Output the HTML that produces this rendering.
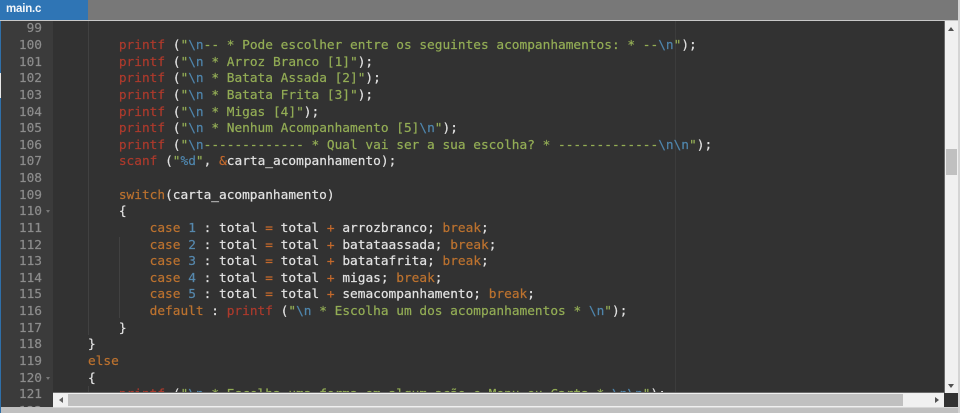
<!DOCTYPE html>
<html><head><meta charset="utf-8">
<style>
html,body{margin:0;padding:0;width:960px;height:413px;overflow:hidden;background:#c0c0c0}
#a{position:absolute;left:0;top:0;width:960px;height:413px;overflow:hidden;filter:blur(.35px)}
.r{position:absolute}
pre{margin:0;position:absolute;font-family:"DejaVu Sans Mono","Liberation Mono",monospace;font-size:12.8px;line-height:16.62px;-webkit-text-stroke:.2px currentColor}
#code{left:88px;top:21.4px;color:#e2e2e2;white-space:pre}
#nums{left:0;top:21.4px;width:42px;text-align:right;color:#8c8c8c}
.f{color:#ad3a2c}.s{color:#93ad55}.e{color:#4f86ad}.k{color:#bc722f}.o{color:#c4692c}.n{color:#5688ad}
</style></head><body><div id="a">
<div class="r" style="left:0;top:0;width:960px;height:20px;background:#787878"></div>
<div class="r" style="left:0;top:0;width:88px;height:20px;background:#2f75b5"></div>
<div class="r" style="left:6px;top:0;font:bold 11.5px/19px 'Liberation Sans',sans-serif;letter-spacing:-.2px;color:#f2f6fa">main.c</div>
<div class="r" style="left:0;top:20px;width:960px;height:1px;background:#c8c8c8"></div>
<div class="r" style="left:958px;top:0;width:2px;height:413px;background:#d4d4d4"></div>
<div class="r" style="left:1px;top:21px;width:957px;height:372px;background:#323232"></div>
<div class="r" style="left:1px;top:21px;width:52px;height:386px;background:#3b3b3b"></div>
<div class="r" style="left:0;top:21px;width:1px;height:392px;background:#2f6fa8"></div>
<div class="r" style="left:0;top:73px;width:1px;height:25px;background:#e8e8e8"></div>
<div class="r" style="left:88px;top:21px;width:1px;height:314px;background:#414141"></div>
<div class="r" style="left:88px;top:386px;width:1px;height:7px;background:#414141"></div>
<div class="r" style="left:119px;top:237px;width:1px;height:81px;background:#414141"></div>
<div class="r" style="left:675px;top:21px;width:1px;height:372px;background:#3c3c3c"></div>
<pre id="nums">99
100
101
102
103
104
105
106
107
108
109
110
111
112
113
114
115
116
117
118
119
120
121
122</pre>
<div class="r" style="left:46px;top:210px;width:0;height:0;border-left:2.5px solid transparent;border-right:2.5px solid transparent;border-top:3px solid #777"></div>
<div class="r" style="left:46px;top:377px;width:0;height:0;border-left:2.5px solid transparent;border-right:2.5px solid transparent;border-top:3px solid #777"></div>
<pre id="code">

    <span class="f">printf</span> (<span class="s">"</span><span class="e">\n</span><span class="s">-- * Pode escolher entre os seguintes acompanhamentos: * --</span><span class="e">\n</span><span class="s">"</span>);
    <span class="f">printf</span> (<span class="s">"</span><span class="e">\n</span><span class="s"> * Arroz Branco [1]"</span>);
    <span class="f">printf</span> (<span class="s">"</span><span class="e">\n</span><span class="s"> * Batata Assada [2]"</span>);
    <span class="f">printf</span> (<span class="s">"</span><span class="e">\n</span><span class="s"> * Batata Frita [3]"</span>);
    <span class="f">printf</span> (<span class="s">"</span><span class="e">\n</span><span class="s"> * Migas [4]"</span>);
    <span class="f">printf</span> (<span class="s">"</span><span class="e">\n</span><span class="s"> * Nenhum Acompanhamento [5]</span><span class="e">\n</span><span class="s">"</span>);
    <span class="f">printf</span> (<span class="s">"</span><span class="e">\n</span><span class="s">------------- * Qual vai ser a sua escolha? * -------------</span><span class="e">\n\n</span><span class="s">"</span>);
    <span class="f">scanf</span> (<span class="s">"</span><span class="e">%d</span><span class="s">"</span>, <span class="o">&amp;</span>carta_acompanhamento);

    <span class="k">switch</span>(carta_acompanhamento)
    {
        <span class="k">case</span> <span class="n">1</span> : total <span class="o">=</span> total <span class="o">+</span> arrozbranco; <span class="k">break</span>;
        <span class="k">case</span> <span class="n">2</span> : total <span class="o">=</span> total <span class="o">+</span> batataassada; <span class="k">break</span>;
        <span class="k">case</span> <span class="n">3</span> : total <span class="o">=</span> total <span class="o">+</span> batatafrita; <span class="k">break</span>;
        <span class="k">case</span> <span class="n">4</span> : total <span class="o">=</span> total <span class="o">+</span> migas; <span class="k">break</span>;
        <span class="k">case</span> <span class="n">5</span> : total <span class="o">=</span> total <span class="o">+</span> semacompanhamento; <span class="k">break</span>;
        <span class="k">default</span> : <span class="f">printf</span> (<span class="s">"</span><span class="e">\n</span><span class="s"> * Escolha um dos acompanhamentos * </span><span class="e">\n</span><span class="s">"</span>);
    }
}
<span class="k">else</span>
{
    <span class="f">printf</span> (<span class="s">"</span><span class="e">\n</span><span class="s"> * Escolha uma forma em algum ação e Menu ou Carta * </span><span class="e">\n\n</span><span class="s">"</span>);</pre>
<!-- vertical scrollbar -->
<div class="r" style="left:944px;top:21px;width:14px;height:372px;background:#f0f0f0;border-left:1px solid #6a6a6a;box-sizing:border-box"></div>
<div class="r" style="left:946px;top:149px;width:11px;height:26px;background:#c0c0c0"></div>
<div class="r" style="left:948px;top:27px;width:0;height:0;border-left:3.5px solid transparent;border-right:3.5px solid transparent;border-bottom:4px solid #505050"></div>
<div class="r" style="left:948px;top:384px;width:0;height:0;border-left:3.5px solid transparent;border-right:3.5px solid transparent;border-top:4px solid #505050"></div>
<!-- horizontal scrollbar -->
<div class="r" style="left:53px;top:392px;width:891px;height:1px;background:#6a6a6a"></div>
<div class="r" style="left:53px;top:393px;width:891px;height:14px;background:#f0f0f0"></div>
<div class="r" style="left:68px;top:394px;width:835px;height:12px;background:#c0c0c0"></div>
<div class="r" style="left:59px;top:397px;width:0;height:0;border-top:3.5px solid transparent;border-bottom:3.5px solid transparent;border-right:4px solid #606060"></div>
<div class="r" style="left:935px;top:397px;width:0;height:0;border-top:3.5px solid transparent;border-bottom:3.5px solid transparent;border-left:4px solid #505050"></div>
<div class="r" style="left:944px;top:393px;width:14px;height:14px;background:#323232"></div>
<div class="r" style="left:1px;top:407px;width:957px;height:6px;background:#c0c0c0"></div>
<div class="r" style="left:53px;top:407px;width:905px;height:1px;background:#d6d6d6"></div>
</div></body></html>
